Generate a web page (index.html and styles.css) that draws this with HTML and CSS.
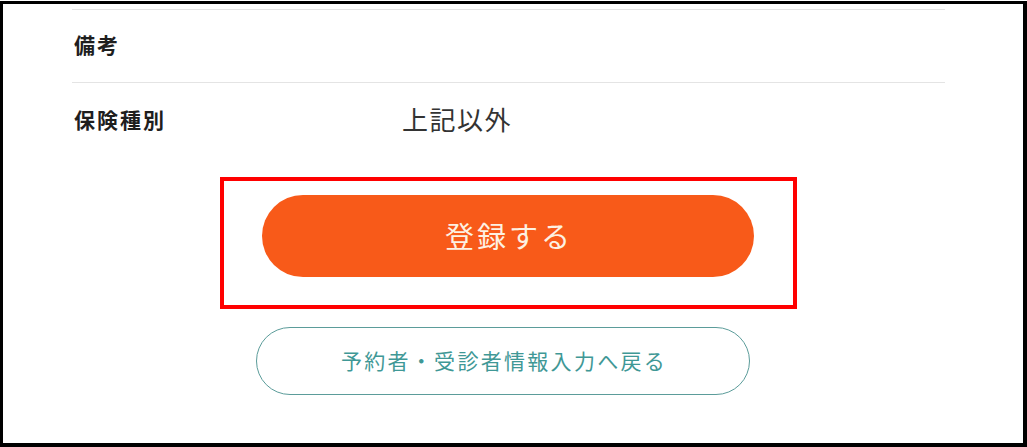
FILE: index.html
```html
<!DOCTYPE html>
<html lang="ja">
<head>
<meta charset="utf-8">
<title>確認</title>
<link rel="stylesheet" href="styles.css">
</head>
<body>
<div class="frame">
  <div class="content">
    <div class="row row-first">
      <div class="label">備考</div>
      <div class="value"></div>
    </div>
    <div class="row row-second">
      <div class="label">保険種別</div>
      <div class="value">上記以外</div>
    </div>
    <div class="actions">
      <div class="highlight">
        <button class="btn-primary" type="button">登録する</button>
      </div>
      <button class="btn-secondary" type="button">予約者・受診者情報入力へ戻る</button>
    </div>
  </div>
</div>
</body>
</html>
```

FILE: styles.css
```css
html, body {
  margin: 0;
  padding: 0;
  background: #ffffff;
}

body {
  font-family: "Noto Sans CJK JP", "Noto Sans", sans-serif;
  color: #222222;
}

.frame {
  box-sizing: border-box;
  width: 1027px;
  height: 446px;
  margin-top: 1px;
  border-style: solid;
  border-color: #000000;
  border-width: 3px 4px 4px 3px;
  overflow: hidden;
}

.content {
  width: 873px;
  margin-left: 69px;
  padding-top: 5px;
}

.row {
  display: flex;
  align-items: center;
  box-sizing: border-box;
  border-top: 1px solid #e4e4e4;
}

.row-first {
  height: 73px;
  padding-bottom: 4px;
}

.row-second {
  height: 78px;
  padding-bottom: 6px;
}

.label {
  width: 330px;
  padding-left: 2px;
  box-sizing: border-box;
  font-size: 21px;
  font-weight: 700;
  letter-spacing: 2px;
  color: #1e1e1e;
}

.value {
  font-size: 26px;
  font-weight: 400;
  letter-spacing: 1.5px;
  color: #333333;
}

.actions {
  display: flex;
  flex-direction: column;
  align-items: center;
  padding-top: 17px;
}

.highlight {
  box-sizing: border-box;
  width: 577px;
  height: 132px;
  border: 4px solid #ff0000;
  padding: 14px 39px 0 38px;
}

.btn-primary {
  display: flex;
  align-items: center;
  justify-content: center;
  width: 492px;
  height: 82px;
  border: none;
  border-radius: 41px;
  background: #f85a19;
  color: #fdf1e2;
  font-family: "Noto Sans CJK JP", "Noto Sans", sans-serif;
  font-size: 29px;
  font-weight: 400;
  letter-spacing: 3px;
  padding: 0 0 3px 2px;
}

.btn-secondary {
  display: flex;
  align-items: center;
  justify-content: center;
  box-sizing: border-box;
  width: 494px;
  height: 68px;
  margin-top: 18px;
  margin-right: 11px;
  border: 1.5px solid #5b9c9a;
  border-radius: 34px;
  background: #ffffff;
  color: #3f9896;
  font-family: "Noto Sans CJK JP", "Noto Sans", sans-serif;
  font-size: 21px;
  font-weight: 400;
  letter-spacing: 2.3px;
  padding: 0 0 3px 2px;
}
```
